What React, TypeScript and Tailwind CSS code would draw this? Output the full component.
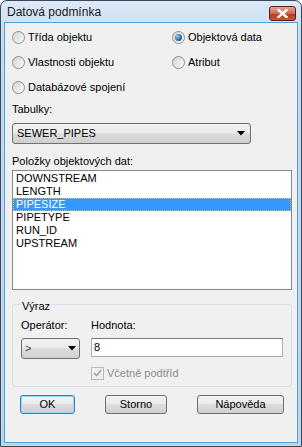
import React from "react";

const items = ["DOWNSTREAM", "LENGTH", "PIPESIZE", "PIPETYPE", "RUN_ID", "UPSTREAM"];

function Radio({ label, checked }: { label: string; checked?: boolean }) {
  return (
    <div className="flex items-center h-[25px]">
      <div className="w-[13px] h-[13px] rounded-full border border-[#8f8f8f] bg-[linear-gradient(135deg,#d2d2d2,#fdfdfd)] flex items-center justify-center">
        {checked && (
          <div className="w-[7px] h-[7px] rounded-full bg-[radial-gradient(circle_at_35%_35%,#8fd3ff,#2a6db0_55%,#17406f)]" />
        )}
      </div>
      <span className="ml-[3px]">{label}</span>
    </div>
  );
}

function Arrow() {
  return (
    <svg width="8" height="5" viewBox="0 0 8 5">
      <path d="M0 0H8L4 4.5Z" fill="#000" />
    </svg>
  );
}

const btn =
  "h-[19px] rounded-[3px] border border-[#707070] bg-[linear-gradient(#f2f2f2,#ebebeb_45%,#dddddd_50%,#cfcfcf)] flex items-center justify-center";

export default function App() {
  return (
    <div
      className="w-[302px] h-[447px] flex flex-col rounded-t-[7px] border border-[#3b4a5a] bg-[linear-gradient(#dce9f6,#c6dbf0_40px,#bcd6ee)] text-[11px] text-black"
      style={{ fontFamily: '"Liberation Sans", Arial, sans-serif' }}
    >
      {/* title bar */}
      <div className="h-[21px] flex items-center justify-between pl-[6px] pr-[5px]">
        <span className="text-[12px] text-[#1a1a1a] mt-[1px]">Datová podmínka</span>
        <div className="w-[27px] h-[15px] mt-[3px] rounded-[3px] border border-[#5a1e1e] bg-[linear-gradient(#e9a493,#d06a55_50%,#b63a22_55%,#c9543b)] flex items-center justify-center">
          <svg width="11" height="9" viewBox="0 0 11 9">
            <path d="M1.5 1 L9.5 8 M9.5 1 L1.5 8" stroke="#fff" strokeWidth="2.4" strokeLinecap="square" />
          </svg>
        </div>
      </div>

      {/* client */}
      <div className="flex-1 mx-[3px] mb-[3px] border border-[#4fa3d8] bg-[#f0f0f0] px-[7px] pt-[2px]">
        <div className="grid grid-cols-[160px_1fr]">
          <Radio label="Třída objektu" />
          <Radio label="Objektová data" checked />
          <Radio label="Vlastnosti objektu" />
          <Radio label="Atribut" />
          <Radio label="Databázové spojení" />
        </div>

        <div className="mt-[2px] h-[14px] leading-[14px]">Tabulky:</div>
        <div className={`${btn} !h-[21px] mt-[7px] w-[239px] !justify-between pl-[4px] pr-[5px]`}>
          <span>SEWER_PIPES</span>
          <Arrow />
        </div>

        <div className="mt-[10px] h-[14px] leading-[14px]">Položky objektových dat:</div>
        <div className="mt-[2px] w-[280px] h-[120px] border border-[#828790] bg-white pt-[1px]">
          {items.map((it) =>
            it === "PIPESIZE" ? (
              <div
                key={it}
                className="h-[13px] leading-[11px] pl-[2px] bg-[#3399ff] text-white border border-dotted border-[#d9b27a]"
              >
                {it}
              </div>
            ) : (
              <div key={it} className="h-[13px] leading-[13px] pl-[3px]">
                {it}
              </div>
            )
          )}
        </div>

        {/* group box */}
        <div className="relative mt-[14px] w-[280px] h-[83px] rounded-[3px] border border-[#d5dfe5] px-[8px] pt-[13px]">
          <span className="absolute -top-[7px] left-[7px] bg-[#f0f0f0] px-[2px]">Výraz</span>
          <div className="flex">
            <div className="w-[70px]">
              <div className="h-[14px] leading-[14px]">Operátor:</div>
              <div className={`${btn} !h-[21px] mt-[6px] w-[59px] !justify-between pl-[3px] pr-[3px]`}>
                <span className="text-[#444]">&gt;</span>
                <Arrow />
              </div>
            </div>
            <div>
              <div className="h-[14px] leading-[14px]">Hodnota:</div>
              <div className="mt-[6px] w-[192px] h-[19px] border border-[#abadb3] border-t-[#7a7a7a] bg-white pl-[2px] leading-[17px]">
                8
              </div>
              <div className="mt-[8px] flex items-center text-[#8d8d8d]">
                <div className="w-[13px] h-[13px] border border-[#b9b9b9] bg-[#f0f0f0] flex items-center justify-center">
                  <svg width="9" height="8" viewBox="0 0 9 8">
                    <path d="M1 4 L3.5 6.5 L8 1" stroke="#a5a5a5" strokeWidth="1.6" fill="none" />
                  </svg>
                </div>
                <span className="ml-[3px]">Včetně podtříd</span>
              </div>
            </div>
          </div>
        </div>

        {/* buttons */}
        <div className="mt-[8px] flex pl-[8px]">
          <div className="w-[55px] h-[19px] rounded-[3px] border border-[#3c7fb1] shadow-[inset_0_0_0_1px_#8fdcfa] bg-[linear-gradient(#f2f2f2,#ebebeb_45%,#dddddd_50%,#cfcfcf)] flex items-center justify-center">
            OK
          </div>
          <div className={`${btn} ml-[30px] w-[62px]`}>Storno</div>
          <div className={`${btn} ml-[30px] w-[87px]`}>Nápověda</div>
        </div>
      </div>
    </div>
  );
}
